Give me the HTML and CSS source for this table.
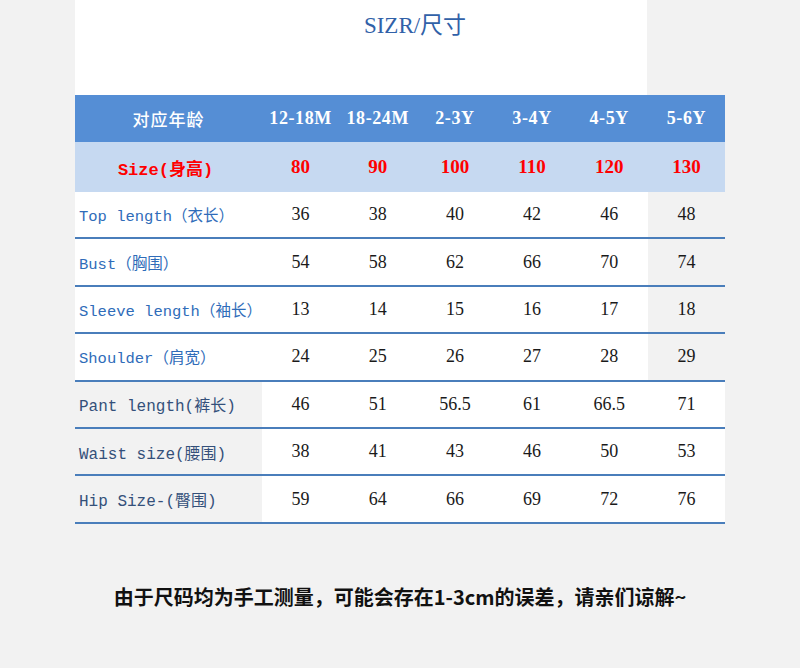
FILE: index.html
```html
<!DOCTYPE html>
<html lang="zh">
<head>
<meta charset="utf-8">
<title>SIZR/尺寸</title>
<link rel="stylesheet" href="styles.css">
</head>
<body>
<div class="page">
  <div class="sheet">
    <h1 class="title">SIZR/尺寸</h1>
  </div>
  <table class="size-table">
    <colgroup>
      <col class="col-label">
      <col><col><col><col><col><col>
    </colgroup>
    <thead>
      <tr class="head-row">
        <th class="cjk">对应年龄</th>
        <th>12-18M</th><th>18-24M</th><th>2-3Y</th><th>3-4Y</th><th>4-5Y</th><th>5-6Y</th>
      </tr>
    </thead>
    <tbody>
      <tr class="size-row">
        <td class="size-label">Size(身高)</td>
        <td>80</td><td>90</td><td>100</td><td>110</td><td>120</td><td>130</td>
      </tr>
      <tr class="data-row">
        <td class="label label-top">Top length（衣长）</td>
        <td>36</td><td>38</td><td>40</td><td>42</td><td>46</td><td class="gray">48</td>
      </tr>
      <tr class="data-row">
        <td class="label label-top">Bust（胸围）</td>
        <td>54</td><td>58</td><td>62</td><td>66</td><td>70</td><td class="gray">74</td>
      </tr>
      <tr class="data-row">
        <td class="label label-top">Sleeve length（袖长）</td>
        <td>13</td><td>14</td><td>15</td><td>16</td><td>17</td><td class="gray">18</td>
      </tr>
      <tr class="data-row">
        <td class="label label-top">Shoulder（肩宽）</td>
        <td>24</td><td>25</td><td>26</td><td>27</td><td>28</td><td class="gray">29</td>
      </tr>
      <tr class="data-row">
        <td class="label label-bottom gray">Pant length(裤长)</td>
        <td>46</td><td>51</td><td>56.5</td><td>61</td><td>66.5</td><td>71</td>
      </tr>
      <tr class="data-row">
        <td class="label label-bottom gray">Waist size(腰围)</td>
        <td>38</td><td>41</td><td>43</td><td>46</td><td>50</td><td>53</td>
      </tr>
      <tr class="data-row">
        <td class="label label-bottom gray">Hip Size-(臀围)</td>
        <td>59</td><td>64</td><td>66</td><td>69</td><td>72</td><td>76</td>
      </tr>
    </tbody>
  </table>
  <p class="note">由于尺码均为手工测量，可能会存在1-3cm的误差，请亲们谅解~</p>
</div>
</body>
</html>
```

FILE: styles.css
```css
html, body {
  margin: 0;
  padding: 0;
}

body {
  background: #f2f2f2;
  width: 800px;
  height: 668px;
  overflow: hidden;
}

.page {
  padding-left: 75px;
}

.sheet {
  width: 572px;
  height: 95px;
  background: #ffffff;
  box-sizing: border-box;
  padding-top: 12px;
  padding-left: 108px;
}

.title {
  margin: 0;
  text-align: center;
  font-family: "Liberation Serif", "Noto Sans CJK SC", serif;
  font-weight: normal;
  font-size: 23px;
  line-height: 28px;
  color: #3161a8;
}

.size-table {
  width: 650px;
  table-layout: fixed;
  border-collapse: separate;
  border-spacing: 0;
  font-family: "Liberation Serif", "Noto Sans CJK SC", serif;
}

.col-label {
  width: 187px;
}

.size-table th,
.size-table td {
  padding: 0;
  text-align: center;
  box-sizing: border-box;
  white-space: nowrap;
}

.head-row th {
  height: 47px;
  background: #558ed5;
  color: #ffffff;
  font-size: 18px;
  font-weight: bold;
  letter-spacing: 0.6px;
}

.head-row th.cjk {
  font-family: "Noto Sans CJK SC", sans-serif;
  font-size: 17px;
  font-weight: 500;
  letter-spacing: 1px;
}

.size-row td {
  height: 50px;
  background: #c6d9f1;
  color: #ff0000;
  font-size: 19px;
  font-weight: bold;
}

.size-row td.size-label {
  font-family: "Liberation Mono", "Noto Sans CJK SC", monospace;
  font-size: 17px;
  font-weight: bold;
  padding-right: 6px;
}

.data-row td {
  height: 47.4px;
  background: #ffffff;
  border-bottom: 2px solid #4a7ebb;
  color: #1a1a1a;
  font-size: 18px;
}

.data-row td.gray {
  background: #f2f2f2;
}

.data-row td.label {
  text-align: left;
  padding-left: 4px;
  font-family: "Liberation Mono", "Noto Sans CJK SC", monospace;
}

.data-row td.label-top {
  color: #2f6cb9;
  font-size: 15.5px;
  font-weight: normal;
}

.data-row td.label-bottom {
  color: #34507a;
  font-size: 16px;
}

.note {
  margin: 61px 0 0 0;
  width: 650px;
  text-align: center;
  font-family: "Noto Sans CJK SC", sans-serif;
  font-weight: bold;
  font-size: 20px;
  line-height: 24px;
  color: #111111;
}
```
